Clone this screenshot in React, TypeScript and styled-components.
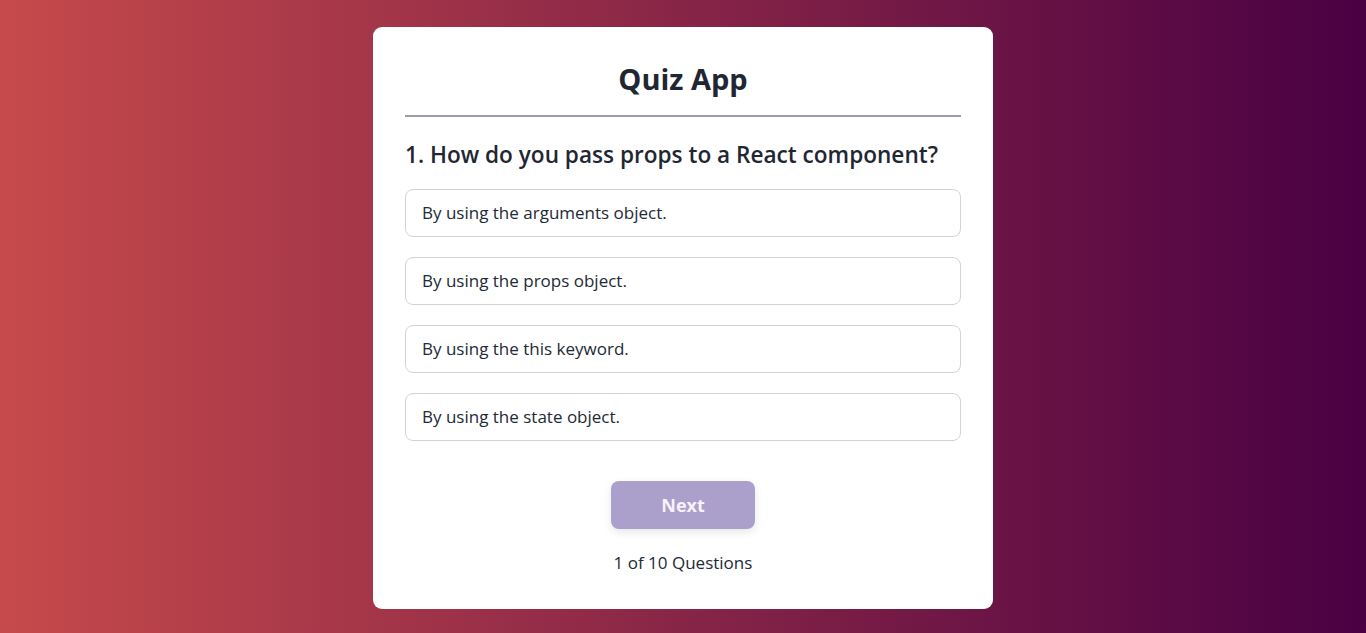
import React from "react";
import styled, { createGlobalStyle } from "styled-components";

const GlobalStyle = createGlobalStyle`
  * { box-sizing: border-box; }
  html, body { margin: 0; padding: 0; }
  body {
    font-family: "Open Sans", "Noto Sans", sans-serif;
    color: #222a35;
  }
`;

const Page = styled.div`
  min-height: 100vh;
  padding-top: 2px;
  display: flex;
  align-items: center;
  justify-content: center;
  background: linear-gradient(to right, #c64a4b, #490043);
`;

const Card = styled.div`
  width: 620px;
  background: #ffffff;
  border-radius: 9px;
  padding: 32px 32px 34px;
  display: flex;
  flex-direction: column;
`;

const Title = styled.h1`
  margin: 0;
  font-size: 29px;
  line-height: 40px;
  font-weight: 700;
  text-align: center;
  color: #1f2733;
`;

const Divider = styled.hr`
  margin: 16px 0 0;
  border: none;
  height: 2px;
  background: #9e9ca7;
`;

const Question = styled.h2`
  margin: 23px 0 0;
  font-size: 22.6px;
  line-height: 30px;
  font-weight: 600;
  color: #1f2733;
  white-space: nowrap;
`;

const Options = styled.ul`
  list-style: none;
  margin: 19px 0 0;
  padding: 0;
  display: flex;
  flex-direction: column;
  gap: 20px;
`;

const Option = styled.li`
  height: 48px;
  display: flex;
  align-items: center;
  padding: 0 16px;
  border: 1px solid #d3d2d9;
  border-radius: 8px;
  font-size: 17px;
  color: #222a35;
`;

const NextButton = styled.button`
  align-self: center;
  margin-top: 40px;
  width: 144px;
  height: 48px;
  border: none;
  border-radius: 8px;
  background: #aba0cc;
  color: #f6f3fa;
  font-family: inherit;
  font-size: 18px;
  font-weight: 700;
  box-shadow: 0 3px 8px rgba(0, 0, 0, 0.1);
  cursor: pointer;
`;

const Counter = styled.div`
  margin-top: 22px;
  text-align: center;
  font-size: 17px;
  line-height: 24px;
  color: #222a35;
`;

const options = [
  "By using the arguments object.",
  "By using the props object.",
  "By using the this keyword.",
  "By using the state object.",
];

export default function App() {
  return (
    <>
      <GlobalStyle />
      <Page>
        <Card>
          <Title>Quiz App</Title>
          <Divider />
          <Question>1. How do you pass props to a React component?</Question>
          <Options>
            {options.map((o) => (
              <Option key={o}>{o}</Option>
            ))}
          </Options>
          <NextButton>Next</NextButton>
          <Counter>1 of 10 Questions</Counter>
        </Card>
      </Page>
    </>
  );
}
